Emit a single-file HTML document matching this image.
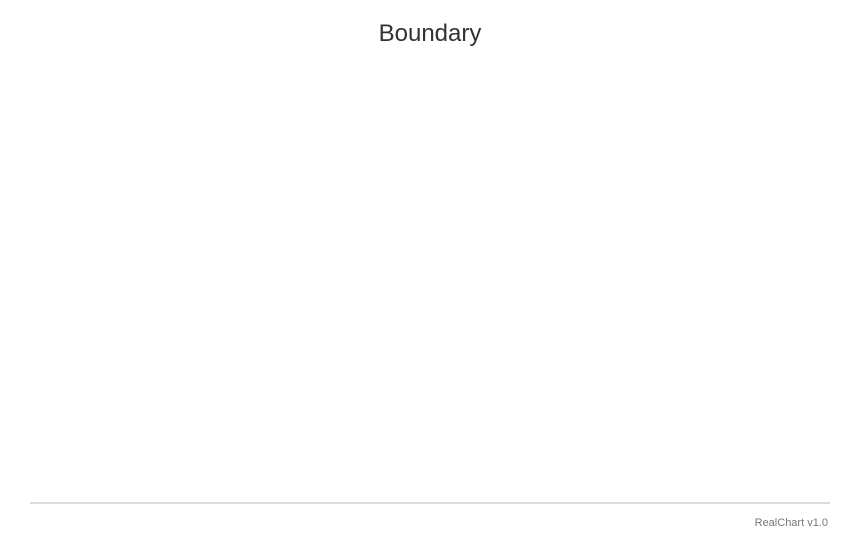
<!DOCTYPE html>
<html><head><style>
html,body{margin:0;padding:0;background:#fff;width:850px;height:550px;overflow:hidden;position:relative;font-family:"Liberation Sans",sans-serif}
.t{position:absolute;top:20px;left:0;width:860px;text-align:center;font-size:24px;color:#333}
.l{position:absolute;left:30px;top:502px;width:800px;height:2px;background:#ddd}
.c{position:absolute;right:22px;top:517px;font-size:11px;color:#777}
</style></head><body>
<div class="t">Boundary</div>
<div class="l"></div>
<div class="c">RealChart v1.0</div>
</body></html>
